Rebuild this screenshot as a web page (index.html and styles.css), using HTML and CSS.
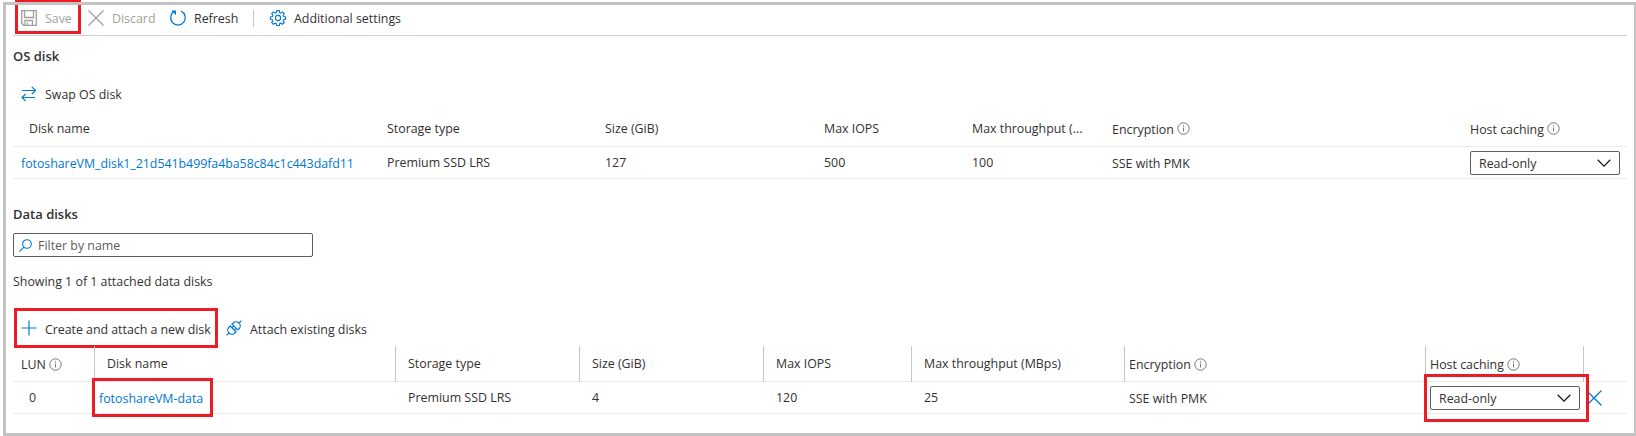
FILE: index.html
```html
<!DOCTYPE html>
<html lang="en">
<head>
<meta charset="utf-8">
<title>Disks</title>
<link rel="stylesheet" href="styles.css">
</head>
<body>
<svg class="defs" width="0" height="0" aria-hidden="true">
  <symbol id="info" viewBox="0 0 13 13"><circle cx="6.5" cy="6.5" r="5.7" fill="none" stroke="#797775"/><path d="M6.5 5.500v4M6.500 3.200v1.300" stroke="#797775" fill="none"/></symbol>
  <symbol id="chevron" viewBox="0 0 14 8"><path d="M.7.8 7 7.100 13.300.8" stroke="#1b1a19" stroke-width="1.300" fill="none"/></symbol>
</svg>
<main class="frame">
  <div class="toolbar">
    <div class="cmd save disabled">
      <svg class="ico" viewBox="0 0 16 16"><path d="M.7.7h14.600v14.600H2.700l-2-2zM3.500.7v6.800h9V.7M4 15.300v-4.800h7.500v4.800M6.500 15v-2.500" fill="none" stroke="#a19f9d" stroke-width="1.300"/></svg>
      <span>Save</span>
    </div>
    <div class="cmd discard disabled">
      <svg class="ico" viewBox="0 0 16 16"><path d="M.5.5l15 15M15.500.5l-15 15" fill="none" stroke="#a19f9d" stroke-width="1.200"/></svg>
      <span>Discard</span>
    </div>
    <div class="cmd refresh">
      <svg class="ico" viewBox="0 0 16 16"><path d="M11 1.100A7.300 7.300 0 1 1 4.800 1.200M1.800 1.200h3.500v3.500" fill="none" stroke="#0078d4" stroke-width="1.300"/></svg>
      <span>Refresh</span>
    </div>
    <div class="divider"></div>
    <div class="cmd settings">
      <svg class="ico" viewBox="0 0 16 16"><path d="M6.700.6h2.600l.4 2 1.200.5 1.800-1.200 1.600 1.600-1.200 1.900.5 1.100 2 .4v2.400l-2 .4-.5 1.200 1.200 1.800-1.700 1.600-1.700-1.100-1.200.5-.4 1.800H6.700l-.4-1.800-1.200-.5-1.800 1.100-1.600-1.600 1.200-1.800-.5-1.200-1.900-.4V6.900l1.900-.4.5-1.200-1.200-1.800 1.700-1.600 1.700 1.200 1.200-.5z" fill="none" stroke="#0078d4" stroke-width="1.100"/><circle cx="8" cy="8" r="2.600" fill="none" stroke="#0078d4" stroke-width="1.100"/></svg>
      <span>Additional settings</span>
    </div>
  </div>

  <h2 class="title os-title">OS disk</h2>
  <div class="cmd swap">
    <svg class="ico" viewBox="0 0 16 16"><path d="M1 4.500h13.500M10.800.8l3.700 3.700-3.700 3.700M14 11.500H1M4.700 7.800 1 11.500l3.700 3.700" fill="none" stroke="#0078d4" stroke-width="1.200"/></svg>
    <span>Swap OS disk</span>
  </div>

  <div class="row os head">
    <div class="c indent"><span>Disk name</span></div>
    <div class="c"><span>Storage type</span></div>
    <div class="c"><span>Size (GiB)</span></div>
    <div class="c"><span>Max IOPS</span></div>
    <div class="c"><span>Max throughput (...</span></div>
    <div class="c low"><span>Encryption</span><svg class="info"><use href="#info"/></svg></div>
    <div class="c low"><span>Host caching</span><svg class="info"><use href="#info"/></svg></div>
  </div>
  <div class="row os body">
    <div class="c low first"><a class="long">fotoshareVM_disk1_21d541b499fa4ba58c84c1c443dafd11</a></div>
    <div class="c"><span>Premium SSD LRS</span></div>
    <div class="c"><span>127</span></div>
    <div class="c"><span>500</span></div>
    <div class="c"><span>100</span></div>
    <div class="c low"><span>SSE with PMK</span></div>
    <div class="c cache"><div class="select"><span>Read-only</span><svg class="chev"><use href="#chevron"/></svg></div></div>
  </div>

  <h2 class="title data-title">Data disks</h2>
  <div class="filter">
    <svg class="mag" viewBox="0 0 13 13"><circle cx="8" cy="5" r="4.300" fill="none" stroke="#0078d4" stroke-width="1.100"/><path d="M4.900 8.100.4 12.600" stroke="#0078d4" stroke-width="1.200"/></svg>
    <span>Filter by name</span>
  </div>
  <p class="showing">Showing 1 of 1 attached data disks</p>
  <div class="actions">
    <div class="cmd create">
      <svg class="ico" viewBox="0 0 16 16"><path d="M8 .5v15M.5 8h15" stroke="#0078d4" stroke-width="1.200"/></svg>
      <span>Create and attach a new disk</span>
    </div>
    <div class="cmd attach">
      <svg class="ico" viewBox="0 0 16 16"><g transform="rotate(-45 8 8)" fill="none" stroke="#0078d4" stroke-width="1.200"><path d="M-2.500 8H1M15 8h3.500M6.700 3.900v8.200H5A4.100 4.100 0 0 1 5 3.900zM9.300 3.900v8.200H11a4.100 4.100 0 0 0 0-8.200zM6.700 6.400h2.600M6.700 9.600h2.600"/></g></svg>
      <span>Attach existing disks</span>
    </div>
  </div>

  <div class="row data head">
    <div class="c low first"><span>LUN</span><svg class="info"><use href="#info"/></svg></div>
    <div class="c sep"><span>Disk name</span></div>
    <div class="c sep"><span>Storage type</span></div>
    <div class="c sep"><span>Size (GiB)</span></div>
    <div class="c sep"><span>Max IOPS</span></div>
    <div class="c sep"><span>Max throughput (MBps)</span></div>
    <div class="c sep low tight"><span>Encryption</span><svg class="info"><use href="#info"/></svg></div>
    <div class="c sep low tight"><span>Host caching</span><svg class="info"><use href="#info"/></svg></div>
    <div class="c sep"></div>
  </div>
  <div class="row data body">
    <div class="c lun"><span>0</span></div>
    <div class="c name"><a>fotoshareVM-data</a><div class="mark mark-name"></div></div>
    <div class="c"><span>Premium SSD LRS</span></div>
    <div class="c"><span>4</span></div>
    <div class="c"><span>120</span></div>
    <div class="c"><span>25</span></div>
    <div class="c low tight"><span>SSE with PMK</span></div>
    <div class="c tight cache"><div class="select"><span>Read-only</span><svg class="chev"><use href="#chevron"/></svg></div><div class="mark mark-cache"></div></div>
    <div class="c del"><svg class="ico" viewBox="0 0 16 16"><path d="M.5.5l15 15M15.500.5l-15 15" stroke="#0078d4" stroke-width="1.300"/></svg></div>
  </div>
</main>
<div class="mark mark-save"></div>
<div class="mark mark-create"></div>
</body>
</html>
```

FILE: styles.css
```css
* { box-sizing: border-box; }
body { margin: 0; background: #fff; width: 1636px; height: 436px; overflow: hidden; position: relative;
  font-family: "Open Sans", "Noto Sans", sans-serif; font-size: 12.4px; line-height: 18px; color: #323130; }
.defs { display: none; }
.frame { position: relative; z-index: 1; margin: 2px 0 0 3px; width: 1634px; height: 434px; border: 3px solid #c3c3c3; padding: 0 7px; }
span, a { white-space: nowrap; }
.toolbar { display: flex; align-items: center; height: 31px; width: 1614px; border-bottom: 1px solid #d2d0ce; padding: 0 0 4px 8px; }
.cmd { display: flex; align-items: center; }
.cmd span { padding-top: 2px; }
.ico { width: 16px; height: 16px; display: block; flex: none; margin-right: 8px; overflow: visible; }
.disabled { color: #a19f9d; }
.save { width: 67px; }
.discard { width: 82px; }
.refresh { width: 83px; }
.divider { width: 1px; height: 17px; background: #c8c6c4; margin-right: 16px; }
.title { margin: 0; font-size: 13px; font-weight: 600; line-height: 20px; height: 20px; }
.os-title { margin-top: 10px; }
.swap { height: 24px; margin-top: 16px; padding-left: 8px; }
.row { display: grid; width: 1614px; border-bottom: 1px solid #edebe9; }
.os { grid-template-columns: 374px 218px 219px 148px 140px 358px 157px; }
.data { grid-template-columns: 81px 301px 184px 184px 148px 213px 301px 158px 44px; }
.c { display: flex; align-items: center; min-width: 0; position: relative; }
.os.head { height: 41px; }
.os.head .c { padding-top: 6px; }
.os.head .c.low { padding-top: 7px; }
.os.body { height: 32px; }
.body .c { padding-top: 1px; }
.low, .body .c.low { padding-top: 2px; }
.c.indent { padding-left: 16px; }
.c.first { padding-left: 8px; }
.info { width: 13px; height: 13px; margin: -2px 0 0 3px; flex: none; }
a { color: #0078d4; }
.long { letter-spacing: -0.04px; }
.select { display: flex; align-items: center; justify-content: space-between; width: 150px; height: 24px; border: 1px solid #605e5c; border-radius: 2px; padding: 0 8px; background: #fff; }
.select span { padding-top: 1px; }
.chev { width: 14px; height: 8px; }
.data-title { margin-top: 25px; }
.filter { display: flex; align-items: center; width: 300px; height: 24px; border: 1px solid #605e5c; border-radius: 2px; margin-top: 9px; padding-left: 5px; color: #605e5c; }
.filter span { padding-top: 1px; }
.mag { width: 13px; height: 13px; margin-right: 6px; }
.showing { margin: 16px 0 0; line-height: 18px; }
.actions { display: flex; height: 40px; margin-top: 16px; padding: 2px 0 0 8px; }
.actions span { padding-top: 3px; }
.create { width: 205px; letter-spacing: -0.03px; }
.data.head { height: 36px; margin-top: -1px; }
.data.body { height: 32px; }
.data .c { padding-left: 13px; }
.data .c.lun { padding-left: 16px; }
.data .c.sep { border-left: 1px solid #c8c6c4; padding-left: 12px; height: 36px; }
.data .c.first { padding-left: 8px; }
.data .c.tight { padding-left: 5px; }
.data .c.sep.tight { padding-left: 4px; }
.data .c.name { padding-left: 5px; padding-top: 2px; }
.data .c.del { padding-left: 3px; padding-top: 0; }
.body .c.cache { padding-top: 1px; z-index: 1; }
.mark { position: absolute; border: 3px solid #ed1c24; }
.mark-save { left: 15px; top: -1px; width: 66px; height: 35px; }
.mark-create { left: 14px; top: 308px; width: 204px; height: 40px; }
.mark-name { left: -2px; top: -4px; width: 121px; height: 39px; }
.mark-cache { left: -1px; top: -8px; width: 165px; height: 48px; }
```
